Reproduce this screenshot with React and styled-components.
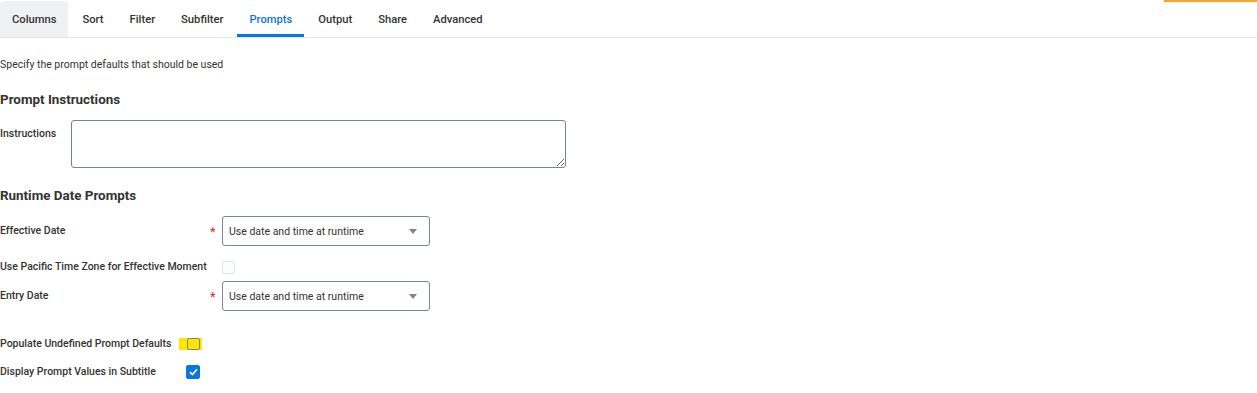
import React from 'react';
import styled, { createGlobalStyle } from 'styled-components';

const GlobalStyle = createGlobalStyle`
  body {
    margin: 0;
    background: #ffffff;
    font-family: Roboto, "Liberation Sans", Arial, sans-serif;
    color: #333333;
  }
`

const Page = styled.div`
  width: 1257px;
  height: 393px;
  position: relative;
  overflow: hidden;
`

const Accent = styled.div`
  position: absolute;
  top: 0;
  right: 0;
  width: 93px;
  height: 2px;
  background: #f9a32b;
`

const TabBar = styled.div`
  display: flex;
  align-items: flex-end;
  height: 37px;
  border-bottom: 1px solid #e3e5e8;
`

const Tab = styled.div`
  height: 36px;
  padding: 3px 12px 0;
  margin-right: ${p => p.$gap}px;
  box-sizing: border-box;
  display: flex;
  align-items: center;
  font-size: 11.2px;
  font-weight: 500;
  color: ${p => (p.$active ? '#0875e1' : '#333333')};
  background: ${p => (p.$selected ? '#f0f1f2' : 'transparent')};
  border-radius: 4px 4px 0 0;
  border-bottom: 3px solid ${p => (p.$active ? '#0875e1' : 'transparent')};
`

const Content = styled.div`
  display: flex;
  flex-direction: column;
`

const Intro = styled.p`
  margin: 20px 0 0;
  font-size: 10.5px;
  line-height: 14px;
  color: #333333;
`

const SectionTitle = styled.h2`
  margin: ${p => p.$top}px 0 0;
  font-size: 13.4px;
  line-height: 18px;
  font-weight: 700;
  color: #333333;
`

const Row = styled.div`
  display: flex;
  align-items: ${p => p.$align || 'center'};
  margin-top: ${p => p.$top}px;
  height: ${p => p.$height}px;
`

const Label = styled.div`
  width: ${p => p.$width}px;
  flex-shrink: 0;
  font-size: 10.5px;
  font-weight: 500;
  line-height: 14px;
  color: #333333;
  white-space: nowrap;
  padding-top: ${p => p.$pad || 0}px;
`

const Required = styled.span`
  width: 12px;
  flex-shrink: 0;
  color: #de2e21;
  font-size: 13px;
  line-height: 14px;
  padding-top: 2px;
`

const TextArea = styled.textarea`
  width: 495px;
  height: 48px;
  box-sizing: border-box;
  border: 1px solid #7b858f;
  border-radius: 3px;
  resize: both;
  margin: 0;
  font-family: inherit;
`

const Select = styled.div`
  width: 208px;
  height: 30px;
  box-sizing: border-box;
  border: 1px solid #7b858f;
  border-radius: 3px;
  display: flex;
  align-items: center;
  justify-content: space-between;
  padding: 0 12px 0 6px;
  font-size: 10.5px;
  color: #333333;
`

const Arrow = styled.span`
  width: 0;
  height: 0;
  border-left: 4px solid transparent;
  border-right: 4px solid transparent;
  border-top: 5px solid #7b858f;
`

const Box = styled.div`
  width: ${p => p.$w}px;
  height: ${p => p.$h}px;
  box-sizing: border-box;
  border-radius: 2px;
  border: 1px solid ${p => p.$border};
  background: ${p => p.$bg};
  display: flex;
  align-items: center;
  justify-content: center;
`

const Highlight = styled.div`
  background: #ffe600;
  padding: 0 2px 0 8px;
  display: flex;
  align-items: center;
  height: 12px;
`

function App() {
  const tabs = ['Columns', 'Sort', 'Filter', 'Subfilter', 'Prompts', 'Output', 'Share', 'Advanced']

  return (
    <>
      <GlobalStyle />
      <Page>
        <Accent />
        <TabBar>
          {tabs.map((t, i) => (
            <Tab key={t} $selected={i === 0} $active={t === 'Prompts'} $gap={2}>{t}</Tab>
          ))}
        </TabBar>
        <Content>
          <Intro>Specify the prompt defaults that should be used</Intro>
          <SectionTitle $top={19}>Prompt Instructions</SectionTitle>
          <Row $top={11} $align="flex-start" $height={48}>
            <Label $width={71} $pad={7}>Instructions</Label>
            <TextArea />
          </Row>
          <SectionTitle $top={19}>Runtime Date Prompts</SectionTitle>
          <Row $top={11} $height={30}>
            <Label $width={210}>Effective Date</Label>
            <Required>*</Required>
            <Select>
              <span>Use date and time at runtime</span>
              <Arrow />
            </Select>
          </Row>
          <Row $top={11} $height={20}>
            <Label $width={222}>Use Pacific Time Zone for Effective Moment</Label>
            <Box $w={13} $h={13} $border="#e1e4e7" $bg="#fbfcfc" />
          </Row>
          <Row $top={4} $height={30}>
            <Label $width={210}>Entry Date</Label>
            <Required>*</Required>
            <Select>
              <span>Use date and time at runtime</span>
              <Arrow />
            </Select>
          </Row>
          <Row $top={23} $height={20}>
            <Label $width={179}>Populate Undefined Prompt Defaults</Label>
            <Highlight>
              <Box $w={13} $h={12} $border="#7b858f" $bg="#ffe600" />
            </Highlight>
          </Row>
          <Row $top={8} $height={20}>
            <Label $width={186}>Display Prompt Values in Subtitle</Label>
            <Box $w={14} $h={14} $border="#0875e1" $bg="#0875e1">
              <svg width="9" height="8" viewBox="0 0 9 8">
                <path d="M1 4.2 L3.4 6.5 L8 1.3" fill="none" stroke="#ffffff" strokeWidth="1.6" />
              </svg>
            </Box>
          </Row>
        </Content>
      </Page>
    </>
  )
}

export default App;
